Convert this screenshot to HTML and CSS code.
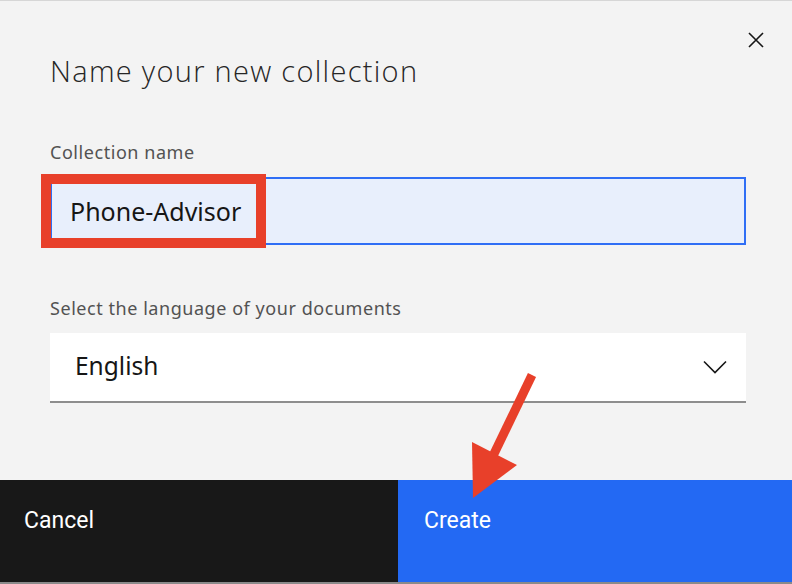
FILE: index.html
```html
<!DOCTYPE html>
<html>
<head>
<meta charset="utf-8">
<link rel="stylesheet" href="styles.css">
</head>
<body>
<div class="modal">
  <div class="header">
    <h1 class="title">Name your new collection</h1>
    <button class="close" aria-label="Close">
      <svg width="16" height="16" viewBox="0 0 16 16"><path d="M1 1 L15 15 M15 1 L1 15" stroke="#161616" stroke-width="1.6" fill="none"/></svg>
    </button>
  </div>
  <div class="body">
    <label class="label">Collection name</label>
    <div class="input">Phone-Advisor</div>
    <label class="label label2">Select the language of your documents</label>
    <div class="select">
      <span>English</span>
      <svg class="chev" width="24" height="14" viewBox="0 0 24 14"><path d="M1 1.5 L12 12.5 L23 1.5" stroke="#161616" stroke-width="1.6" fill="none"/></svg>
    </div>
  </div>
  <div class="footer">
    <div class="btn cancel">Cancel</div>
    <div class="btn create">Create</div>
  </div>
  <div class="redbox"></div>
  <svg class="arrow" width="792" height="584" viewBox="0 0 792 584">
    <path d="M532 375 L492 458" stroke="#e8402a" stroke-width="9" fill="none"/>
    <polygon points="472,442 517,465 473,498" fill="#e8402a"/>
  </svg>
</div>
</body>
</html>
```

FILE: styles.css
```css
* { box-sizing: border-box; }
html, body { margin: 0; padding: 0; }
body {
  width: 792px;
  height: 584px;
  overflow: hidden;
  font-family: "Noto Sans", "Open Sans", sans-serif;
  background: #f3f3f3;
}
.modal {
  position: relative;
  width: 792px;
  height: 584px;
  display: flex;
  flex-direction: column;
  border-top: 1px solid #d6d6d6;
  background: #f3f3f3;
}
.header {
  display: flex;
  justify-content: space-between;
  align-items: flex-start;
  padding: 0 28px 0 50px;
}
.title {
  margin: 52px 0 0 0;
  font-family: "Open Sans", sans-serif;
  font-weight: 300;
  font-size: 29px;
  line-height: 36px;
  color: #262626;
  letter-spacing: 1.3px;
}
.close {
  margin-top: 31px;
  width: 16px;
  height: 16px;
  padding: 0;
  border: 0;
  background: none;
  display: flex;
}
.body {
  display: flex;
  flex-direction: column;
  padding: 0 46px 0 50px;
}
.label {
  margin-top: 52px;
  font-size: 18px;
  line-height: 22px;
  letter-spacing: 0.55px;
  color: #525252;
}
.input {
  margin-top: 14px;
  height: 68px;
  border: 2px solid #2f6ef5;
  background: #e8effc;
  display: flex;
  align-items: center;
  padding-left: 18px;
  font-size: 25px;
  color: #161616;
}
.label2 { margin-top: 52px; }
.select {
  margin-top: 14px;
  height: 70px;
  background: #ffffff;
  border-bottom: 2px solid #8d8d8d;
  display: flex;
  align-items: center;
  justify-content: space-between;
  padding: 0 19px 3px 25px;
  font-size: 24.5px;
  color: #161616;
}
.chev { margin-top: 2px; }
.footer {
  margin-top: auto;
  height: 104px;
  display: flex;
  border-bottom: 2px solid #8a8a8a;
}
.btn {
  flex: 1;
  padding: 27px 24px 0 24px;
  font-size: 23px;
  line-height: 28px;
  color: #ffffff;
  font-family: Roboto, sans-serif;
}
.cancel { background: #181818; flex: 0 0 398px; }
.create { background: #2369f3; padding-left: 26px; }
.redbox {
  position: absolute;
  left: 41px;
  top: 173px;
  width: 225px;
  height: 74px;
  border: 10px solid #e8402a;
}
.arrow {
  position: absolute;
  left: 0;
  top: -1px;
  pointer-events: none;
}
```
